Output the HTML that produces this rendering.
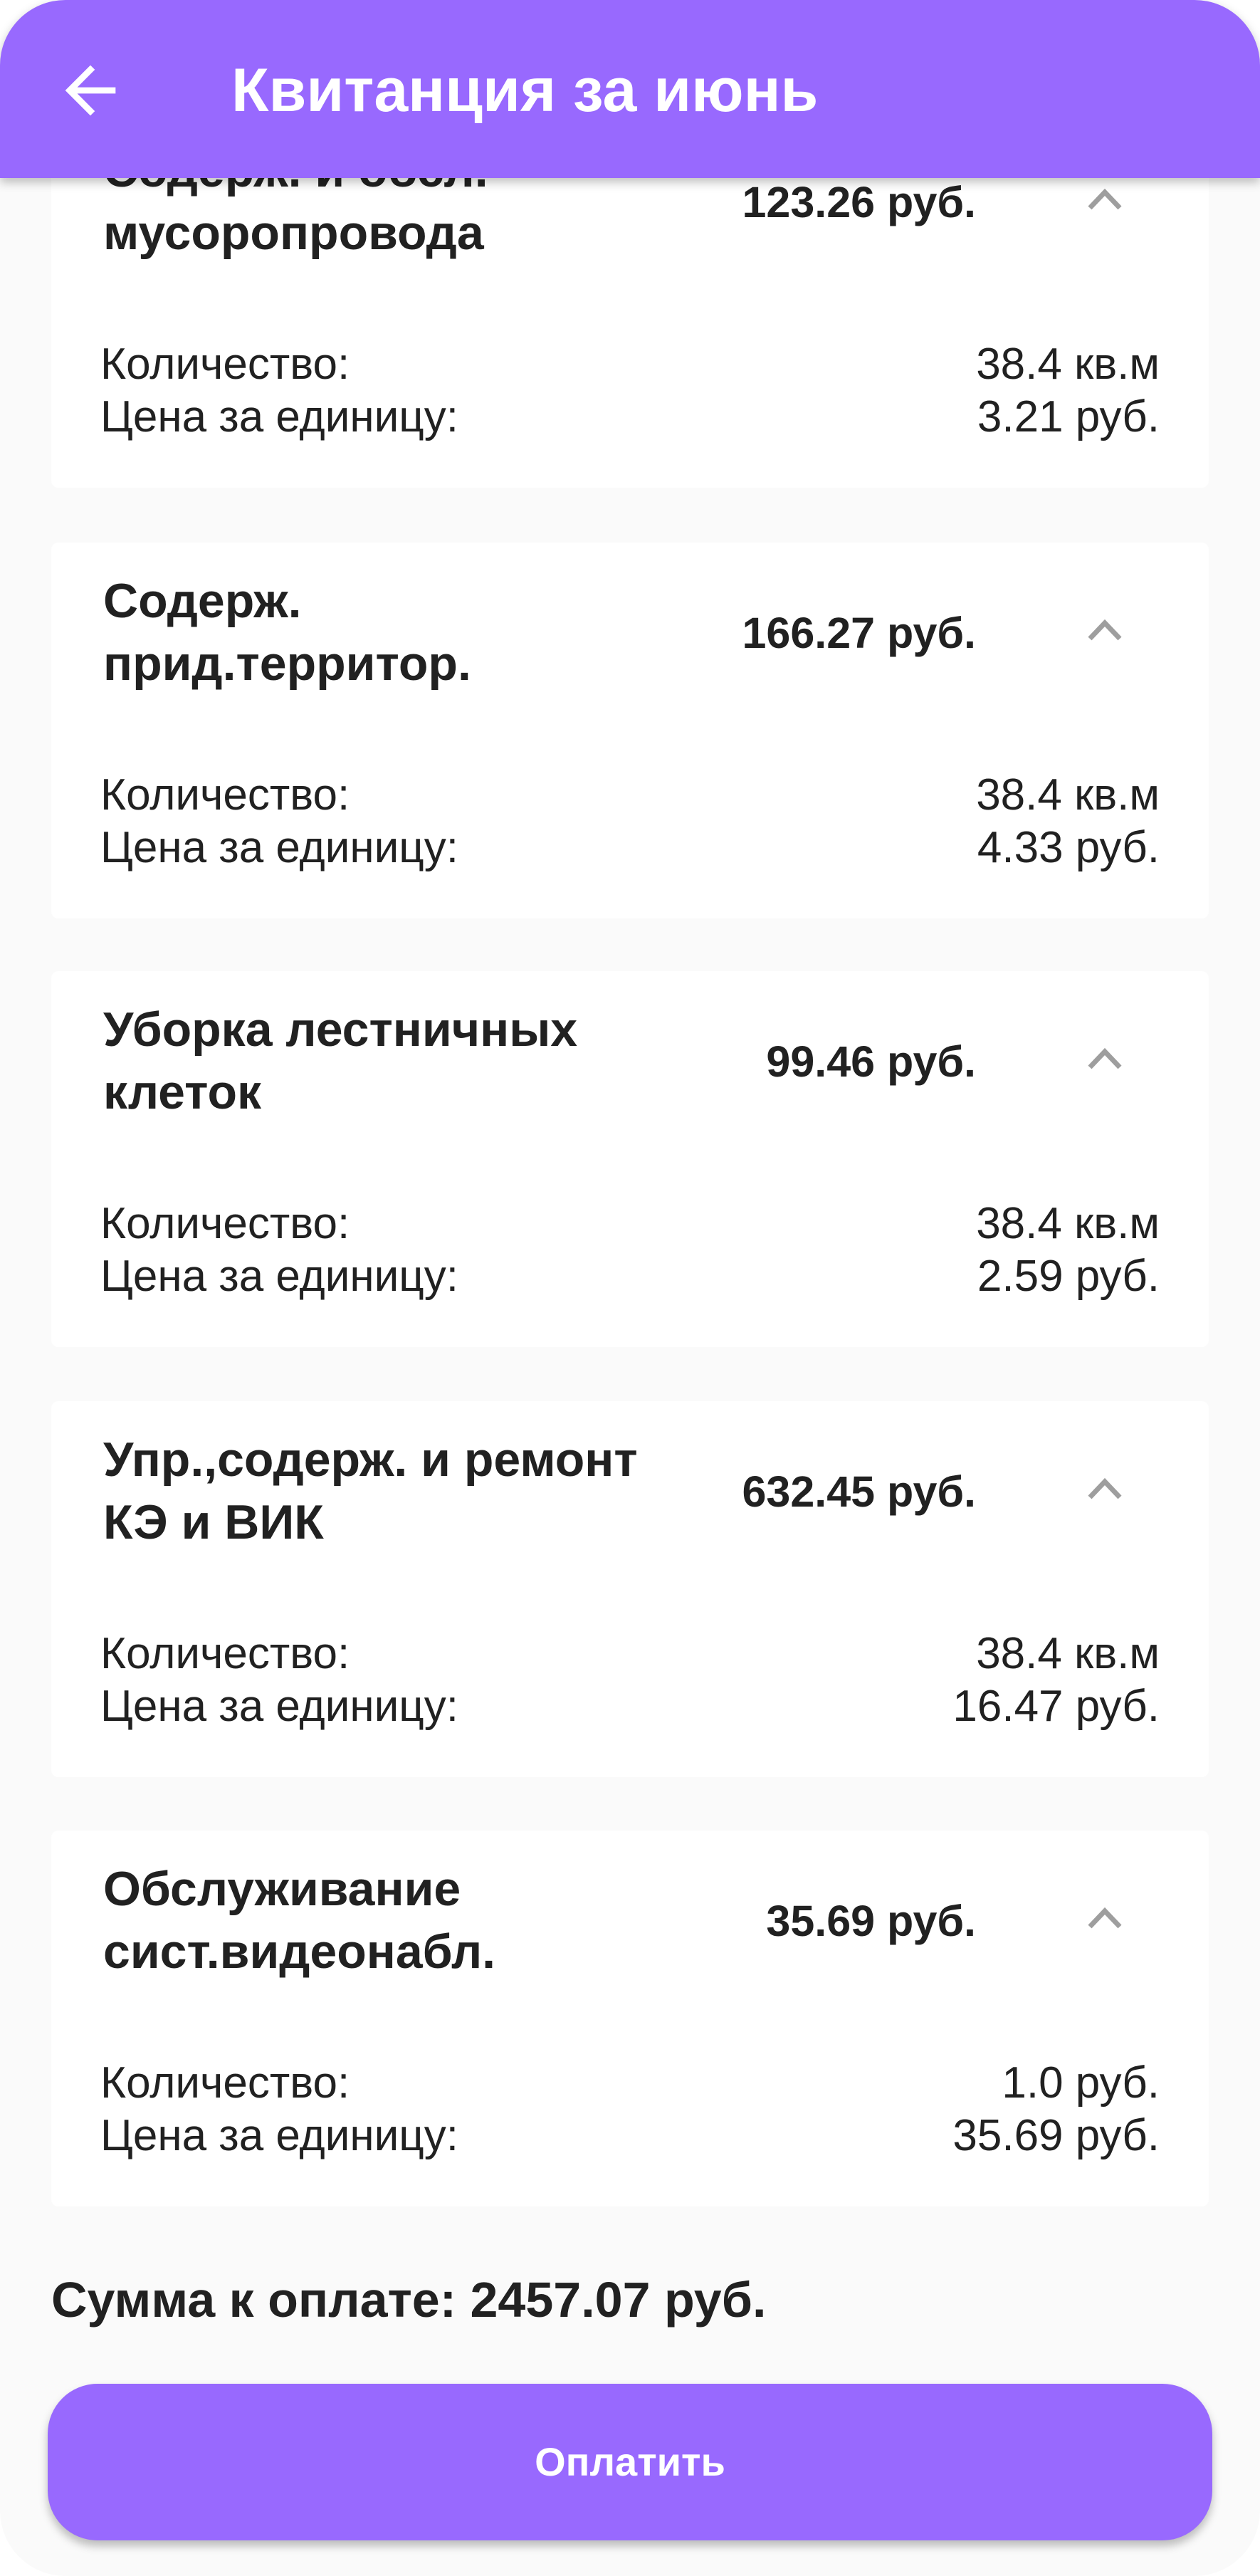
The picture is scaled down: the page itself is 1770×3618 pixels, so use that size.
<!DOCTYPE html>
<html><head><meta charset="utf-8"><style>
*{margin:0;padding:0;box-sizing:border-box}
html,body{width:1770px;height:3618px;overflow:hidden;background:#fff}
body{font-family:"Liberation Sans",sans-serif;color:#212121;position:relative}
.page{position:absolute;left:0;top:0;width:1770px;height:3618px;background:#fafafa;border-radius:92px}
.hdr{position:absolute;left:0;top:0;width:1770px;height:250px;background:#9869fe;border-radius:92px 92px 0 0;box-shadow:0 6px 14px rgba(0,0,0,.25);z-index:5}
.hdr h1{position:absolute;left:325px;top:80px;font-size:86px;font-weight:bold;color:#fff;line-height:94px;white-space:nowrap}
.hdr svg{position:absolute;left:74px;top:74px}
.card{position:absolute;left:72px;width:1626px;height:528px;background:#fff;border-radius:10px}
.t{position:absolute;left:73px;top:38px;font-size:68px;font-weight:bold;line-height:88px;width:900px;white-space:nowrap}
.p{position:absolute;right:327px;top:92px;font-size:61px;font-weight:bold;line-height:70px;white-space:nowrap}
.ch{position:absolute;left:1455px;top:105px}
.r{position:absolute;left:69px;right:69px;font-size:62px;line-height:74px}
.r span{position:absolute;right:0;top:0}
.sum{position:absolute;left:72px;top:3190px;font-size:70px;font-weight:bold;line-height:80px;white-space:nowrap}
.btn{position:absolute;left:67px;top:3348px;width:1636px;height:220px;background:#9869fe;border-radius:70px;box-shadow:0 8px 12px rgba(0,0,0,.25);color:#fff;font-size:56px;font-weight:bold;text-align:center;line-height:220px}
</style></head><body>
<div class="page"></div>
<div class="hdr">
<svg width="106" height="106" viewBox="0 0 24 24"><path d="M20 11H7.83l5.59-5.59L12 4l-8 8 8 8 1.41-1.41L7.83 13H20v-2z" fill="#fff"/></svg>
<h1>Квитанция за июнь</h1>
</div>

<div class="card" style="top:157px">
<div class="t">Содерж. и обсл.<br>мусоропровода</div><div class="p">123.26 руб.</div>
<svg class="ch" width="50" height="34" viewBox="0 0 50 34"><path d="M4 30 L25 8 L46 30" stroke="#9e9e9e" stroke-width="7" fill="none"/></svg>
<div class="r" style="top:318px">Количество:<span>38.4 кв.м</span></div>
<div class="r" style="top:392px">Цена за единицу:<span>3.21 руб.</span></div>
</div>

<div class="card" style="top:762px">
<div class="t">Содерж.<br>прид.территор.</div><div class="p">166.27 руб.</div>
<svg class="ch" width="50" height="34" viewBox="0 0 50 34"><path d="M4 30 L25 8 L46 30" stroke="#9e9e9e" stroke-width="7" fill="none"/></svg>
<div class="r" style="top:318px">Количество:<span>38.4 кв.м</span></div>
<div class="r" style="top:392px">Цена за единицу:<span>4.33 руб.</span></div>
</div>

<div class="card" style="top:1364px">
<div class="t">Уборка лестничных<br>клеток</div><div class="p">99.46 руб.</div>
<svg class="ch" width="50" height="34" viewBox="0 0 50 34"><path d="M4 30 L25 8 L46 30" stroke="#9e9e9e" stroke-width="7" fill="none"/></svg>
<div class="r" style="top:318px">Количество:<span>38.4 кв.м</span></div>
<div class="r" style="top:392px">Цена за единицу:<span>2.59 руб.</span></div>
</div>

<div class="card" style="top:1968px">
<div class="t">Упр.,содерж. и ремонт<br>КЭ и ВИК</div><div class="p">632.45 руб.</div>
<svg class="ch" width="50" height="34" viewBox="0 0 50 34"><path d="M4 30 L25 8 L46 30" stroke="#9e9e9e" stroke-width="7" fill="none"/></svg>
<div class="r" style="top:318px">Количество:<span>38.4 кв.м</span></div>
<div class="r" style="top:392px">Цена за единицу:<span>16.47 руб.</span></div>
</div>

<div class="card" style="top:2571px">
<div class="t">Обслуживание<br>сист.видеонабл.</div><div class="p">35.69 руб.</div>
<svg class="ch" width="50" height="34" viewBox="0 0 50 34"><path d="M4 30 L25 8 L46 30" stroke="#9e9e9e" stroke-width="7" fill="none"/></svg>
<div class="r" style="top:318px">Количество:<span>1.0 руб.</span></div>
<div class="r" style="top:392px">Цена за единицу:<span>35.69 руб.</span></div>
</div>

<div class="sum">Сумма к оплате: 2457.07 руб.</div>
<div class="btn">Оплатить</div>
</body></html>
